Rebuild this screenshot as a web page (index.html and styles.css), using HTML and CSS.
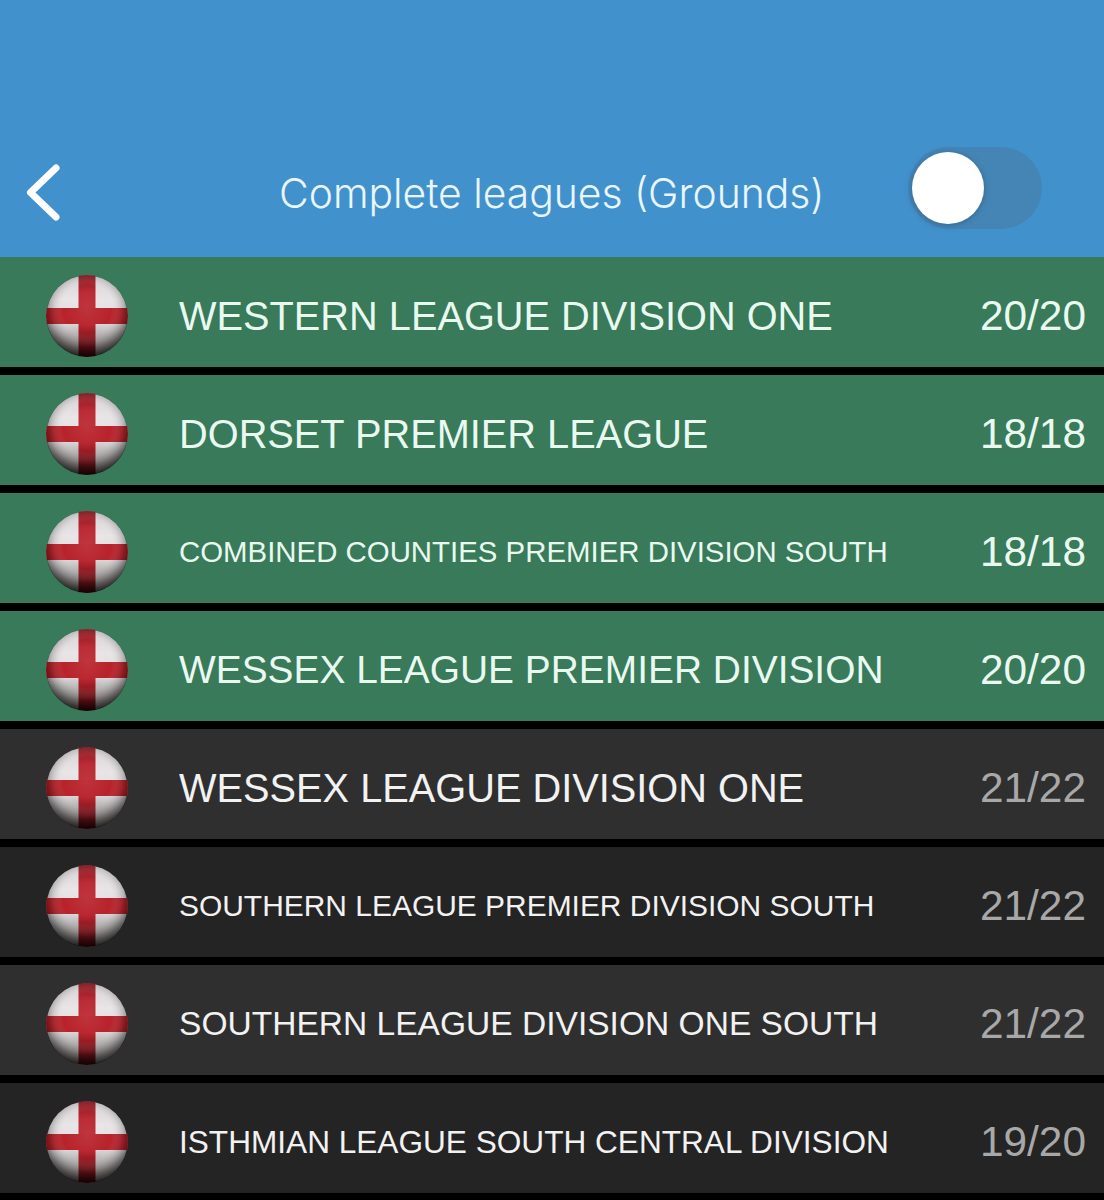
FILE: index.html
```html
<!DOCTYPE html>
<html lang="en">
<head>
  <meta charset="UTF-8">
  <meta name="viewport" content="width=device-width,initial-scale=1.0">
  <title>Complete leagues (Grounds)</title>
  <link rel="stylesheet" href="styles.css">
</head>
<body>
  <svg class="defs" width="0" height="0">
    <defs>
      <radialGradient id="shine" cx="50%" cy="42%" r="58%">
        <stop offset="0%" stop-color="#fff" stop-opacity="0.08"/>
        <stop offset="50%" stop-color="#fff" stop-opacity="0"/>
        <stop offset="78%" stop-color="#000" stop-opacity="0.22"/>
        <stop offset="100%" stop-color="#000" stop-opacity="0.7"/>
      </radialGradient>
      <linearGradient id="base" x1="0" y1="0" x2="0" y2="1">
        <stop offset="0%" stop-color="#d8d4d6"/>
        <stop offset="30%" stop-color="#e9e5e7"/>
        <stop offset="58%" stop-color="#dedbdc"/>
        <stop offset="100%" stop-color="#6f6a68"/>
      </linearGradient>
      <linearGradient id="red" x1="0" y1="0" x2="0" y2="1">
        <stop offset="0%" stop-color="#8f1c24"/>
        <stop offset="22%" stop-color="#b92831"/>
        <stop offset="60%" stop-color="#ba222b"/>
        <stop offset="100%" stop-color="#3c090d"/>
      </linearGradient>
      <clipPath id="ball"><circle cx="41" cy="41" r="41"/></clipPath>
      <symbol id="flag" viewBox="0 0 82 82">
        <g clip-path="url(#ball)">
          <circle cx="41" cy="41" r="40.5" fill="url(#base)"/>
          <rect x="32.5" width="17" height="82" fill="url(#red)"/>
          <rect y="33" width="82" height="16" fill="#b8222b"/>
          <circle cx="41" cy="41" r="41" fill="url(#shine)"/>
        </g>
      </symbol>
    </defs>
  </svg>

  <header class="topbar">
    <svg class="back" width="36" height="60" viewBox="0 0 36 60">
      <path d="M30 5 L4.500 29.500 L30 54" fill="none" stroke="#fff" stroke-width="7" stroke-linecap="round" stroke-linejoin="round"/>
    </svg>
    <h1 class="title">Complete leagues (Grounds)</h1>
    <div class="toggle"><span class="knob"></span></div>
  </header>

  <ul class="leagues">
    <li class="row done">
      <svg class="flag"><use href="#flag"/></svg>
      <span class="name size-a">WESTERN LEAGUE DIVISION ONE</span>
      <span class="count">20/20</span>
    </li>
    <li class="row done">
      <svg class="flag"><use href="#flag"/></svg>
      <span class="name size-a">DORSET PREMIER LEAGUE</span>
      <span class="count">18/18</span>
    </li>
    <li class="row done">
      <svg class="flag"><use href="#flag"/></svg>
      <span class="name size-d">COMBINED COUNTIES PREMIER DIVISION SOUTH</span>
      <span class="count">18/18</span>
    </li>
    <li class="row done">
      <svg class="flag"><use href="#flag"/></svg>
      <span class="name size-b">WESSEX LEAGUE PREMIER DIVISION</span>
      <span class="count">20/20</span>
    </li>
    <li class="row odd">
      <svg class="flag"><use href="#flag"/></svg>
      <span class="name size-a">WESSEX LEAGUE DIVISION ONE</span>
      <span class="count">21/22</span>
    </li>
    <li class="row even">
      <svg class="flag"><use href="#flag"/></svg>
      <span class="name size-e">SOUTHERN LEAGUE PREMIER DIVISION SOUTH</span>
      <span class="count">21/22</span>
    </li>
    <li class="row odd">
      <svg class="flag"><use href="#flag"/></svg>
      <span class="name size-c">SOUTHERN LEAGUE DIVISION ONE SOUTH</span>
      <span class="count">21/22</span>
    </li>
    <li class="row even">
      <svg class="flag"><use href="#flag"/></svg>
      <span class="name size-f">ISTHMIAN LEAGUE SOUTH CENTRAL DIVISION</span>
      <span class="count">19/20</span>
    </li>
  </ul>
</body>
</html>
```

FILE: styles.css
```css
html, body {
  margin: 0;
  padding: 0;
  background: #000;
  font-family: "Liberation Sans", Arial, sans-serif;
  color: #fff;
}
.defs {
  display: block;
  height: 0;
}
.topbar {
  height: 257px;
  padding: 0 62px 0 26px;
  box-sizing: border-box;
  background: #4191cd;
  display: flex;
  align-items: flex-end;
}
.back {
  margin-bottom: 34px;
  flex: none;
}
.title {
  margin: 0 0 38px 217px;
  font-size: 40.800px;
  line-height: 52px;
  font-weight: 300;
  font-family: Inter, sans-serif;
  color: #e9f6fb;
  white-space: nowrap;
}
.toggle {
  width: 134px;
  height: 82px;
  margin-left: auto;
  margin-bottom: 28px;
  border-radius: 41px;
  background: #4585b6;
  display: flex;
  align-items: center;
  padding-left: 4px;
  box-sizing: border-box;
  flex: none;
}
.knob {
  width: 72px;
  height: 72px;
  border-radius: 50%;
  background: #fff;
  box-shadow: 0 1px 6px rgba(40, 70, 100, 0.5);
}
.leagues {
  list-style: none;
  margin: 0;
  padding: 0;
  display: flex;
  flex-direction: column;
  gap: 8px;
}
.row {
  height: 110px;
  box-sizing: border-box;
  display: flex;
  align-items: center;
  padding: 8px 18px 0 46px;
}
.flag {
  width: 82px;
  height: 82px;
  flex: none;
  margin-right: 51px;
}
.name {
  flex: 1;
  white-space: nowrap;
  color: #e9f9f0;
}
.count {
  font-size: 42.4px;
  color: #e9f9f0;
}
.done {
  background: #387a59;
}
.odd {
  background: #2f2f2f;
}
.even {
  background: #242424;
}
.odd .name, .even .name {
  color: #f2f2f2;
}
.odd .count, .even .count {
  color: #a8a8a8;
}
.size-a { font-size: 39.75px; }
.size-b { font-size: 38.9px; }
.size-c { font-size: 33.55px; }
.size-d { font-size: 29.4px; }
.size-e { font-size: 29.95px; }
.size-f { font-size: 31.6px; }
```
